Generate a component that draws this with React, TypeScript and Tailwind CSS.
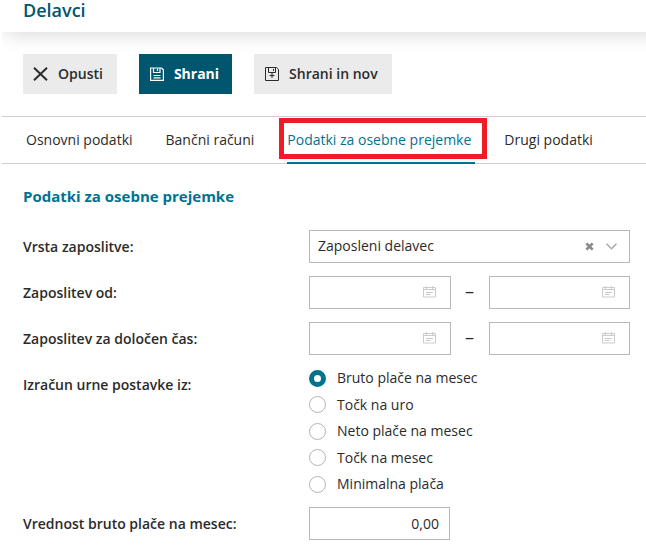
import { useState } from "react";
import clsx from "clsx";

const TABS = ["Osnovni podatki", "Bančni računi", "Podatki za osebne prejemke", "Drugi podatki"];

const RATE_SOURCES = [
  "Bruto plače na mesec",
  "Točk na uro",
  "Neto plače na mesec",
  "Točk na mesec",
  "Minimalna plača",
];

function CloseIcon() {
  return (
    <svg width="15" height="14" viewBox="0 0 15 14" fill="none" stroke="currentColor" strokeWidth="2" aria-hidden="true">
      <path d="M1 .8 14 13.2M14 .8 1 13.2" />
    </svg>
  );
}

function SaveIcon() {
  return (
    <svg width="14" height="14" viewBox="0 0 14 14" fill="none" stroke="currentColor" strokeWidth="1.2" aria-hidden="true">
      <path d="M.6 1h11l1.8 1.8V13.4H.6z" />
      <path d="M3.5 1v4.5h6.500v-4.500M7.500 1.500v2.500M3.500 8.500h7M3.500 10.800h7" />
    </svg>
  );
}

function SaveNewIcon() {
  return (
    <svg width="14" height="14" viewBox="0 0 14 14" fill="none" stroke="currentColor" aria-hidden="true">
      <path d="M.5 .5h11l2 2V13.5H.5z" />
      <path d="M3.5 .5v5h7v-5M8.500 2v2M7 5.500v5.500M4.500 8.500h5" />
    </svg>
  );
}

function CalendarIcon() {
  return (
    <svg width="13" height="12" viewBox="0 0 13 12" fill="none" stroke="currentColor" aria-hidden="true">
      <path d="M.5 1.500h12v9.500H.5zM.5 3.500h12M3.500 0v3M9.500 0v3M3 6.500h7M3 8.500h4.500" />
    </svg>
  );
}

function DateInput({ id, label }: { id?: string; label?: string }) {
  return (
    <div className="flex h-[33px] min-w-0 flex-1 items-center border border-[#b9b9bb] pr-3.5 pb-0.5">
      <input id={id} aria-label={label} type="text" className="h-full min-w-0 flex-1 px-2 outline-none" />
      <button type="button" aria-label="Koledar" className="text-[#cbcbcb]">
        <CalendarIcon />
      </button>
    </div>
  );
}

function DateRange({ id, label }: { id: string; label: string }) {
  return (
    <div className="flex items-center">
      <label htmlFor={id} className="w-[286px] shrink-0 font-semibold">
        {label}
      </label>
      <div className="flex min-w-0 flex-1 items-center">
        <DateInput id={id} />
        <span className="w-[38px] pb-1 text-center text-lg leading-5">–</span>
        <DateInput label={`${label} do`} />
      </div>
    </div>
  );
}

export default function App() {
  const [activeTab, setActiveTab] = useState(2);
  const [employment, setEmployment] = useState("delavec");
  const [source, setSource] = useState(0);
  const [grossPay, setGrossPay] = useState("0,00");

  return (
    <div className="ml-0.5 overflow-hidden bg-white font-['Open_Sans',sans-serif] text-sm leading-5 text-[#2b2b2b]">
      <header className="-mr-5 h-8 pl-[21px] shadow-[0_6px_20px_-4px_rgba(0,0,0,0.16)]">
        <h1 className="text-lg leading-5 font-semibold text-[#00556f]">Delavci</h1>
      </header>

      <div className="flex gap-[22px] px-[21px] py-[22px]">
        <button type="button" className="flex h-10 items-center gap-2.5 bg-[#ebebeb] pr-3.5 pl-2.5 font-semibold">
          <CloseIcon />
          Opusti
        </button>
        <button type="button" className="flex h-10 items-center gap-2.5 bg-[#00556f] pr-[13px] pl-[11px] font-bold text-white">
          <SaveIcon />
          Shrani
        </button>
        <button type="button" className="flex h-10 items-center gap-2.5 bg-[#ebebeb] pr-3.5 pl-[11px] font-semibold">
          <SaveNewIcon />
          Shrani in nov
        </button>
      </div>

      <nav className="flex h-12 gap-[33px] border-y border-[#cfcfcf] pl-6">
        {TABS.map((tab, i) => (
          <button
            key={tab}
            type="button"
            onClick={() => setActiveTab(i)}
            className={clsx("relative whitespace-nowrap", i === activeTab && "text-[#007391]")}
          >
            {tab}
            {i === activeTab && (
              <>
                <span className="absolute top-px -right-4 -left-2 h-[41px] border-[5px] border-[#ee1c25]" />
                <span className="absolute -right-1 -bottom-px left-0 h-0.5 bg-[#007391]" />
              </>
            )}
          </button>
        ))}
      </nav>

      <form className="flex flex-col gap-[13px] pt-[22px] pr-4 pl-[21px]">
        <h2 className="mb-[11px] text-[15px] leading-5 font-bold text-[#007391]">Podatki za osebne prejemke</h2>

        <div className="flex items-center">
          <label htmlFor="employment" className="w-[286px] shrink-0 font-semibold">
            Vrsta zaposlitve:
          </label>
          <div className="relative h-[33px] min-w-0 flex-1 border border-[#b9b9bb]">
            <select
              id="employment"
              value={employment}
              onChange={(e) => setEmployment(e.target.value)}
              className="h-full w-full appearance-none pr-14 pb-0.5 pl-2 outline-none"
            >
              <option value=""></option>
              <option value="delavec">Zaposleni delavec</option>
            </select>
            <div className="pointer-events-none absolute inset-y-0 right-3 flex items-center gap-3 text-[#8a8a8a]">
              <button type="button" aria-label="Počisti" className="pointer-events-auto" onClick={() => setEmployment("")}>
                <svg width="9" height="9" viewBox="0 0 10 10" stroke="currentColor" strokeWidth="3" aria-hidden="true">
                  <path d="M1.5 1.5l7 7M8.5 1.5l-7 7" />
                </svg>
              </button>
              <svg width="11" height="7" viewBox="0 0 11 7" fill="none" stroke="#aaa" strokeWidth="1.5" aria-hidden="true">
                <path d="M.5 .8 5.5 5.8 10.5 .8" />
              </svg>
            </div>
          </div>
        </div>

        <DateRange id="employed-from" label="Zaposlitev od:" />
        <DateRange id="fixed-term" label="Zaposlitev za določen čas:" />

        <fieldset className="flex items-start">
          <legend className="float-left w-[286px] pt-[7px] font-semibold">Izračun urne postavke iz:</legend>
          <div className="flex h-[126px] flex-col justify-between">
            {RATE_SOURCES.map((label, i) => (
              <label key={label} className="flex items-center gap-[11px]">
                <input
                  type="radio"
                  name="rate-source"
                  checked={source === i}
                  onChange={() => setSource(i)}
                  className="size-[17px] appearance-none rounded-full border border-[#b4b4b4] bg-white checked:border-[5px] checked:border-[#007391]"
                />
                {label}
              </label>
            ))}
          </div>
        </fieldset>

        <div className="flex items-center">
          <label htmlFor="gross-pay" className="w-[286px] shrink-0 font-semibold">
            Vrednost bruto plače na mesec:
          </label>
          <input
            id="gross-pay"
            type="text"
            value={grossPay}
            onChange={(e) => setGrossPay(e.target.value)}
            className="h-[33px] w-[141px] border border-[#b9b9bb] px-2.5 text-right outline-none"
          />
        </div>
      </form>
    </div>
  );
}
